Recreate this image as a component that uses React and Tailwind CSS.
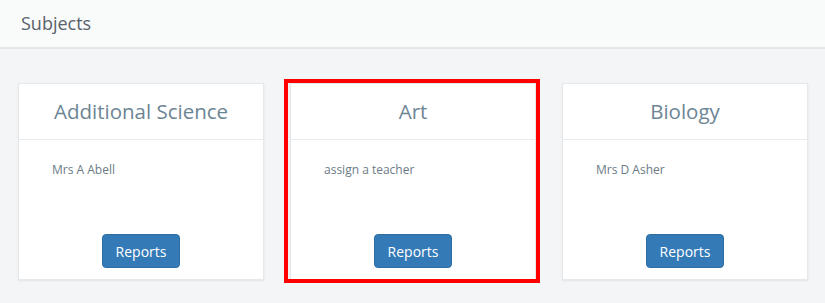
import React from "react";

const subjects = [
  { name: "Additional Science", teacher: "Mrs A Abell" },
  { name: "Art", teacher: "assign a teacher", highlight: true },
  { name: "Biology", teacher: "Mrs D Asher" },
];

function Card({ s }) {
  return (
    <div className="relative w-[246px]">
      {s.highlight && (
        <div className="absolute left-[-6px] top-[-4px] right-[-4px] bottom-[-3px] border-4 border-[#ff0000] pointer-events-none z-10" />
      )}
      <div className="bg-white border border-[#e6e9eb] shadow-[0_1px_2px_rgba(0,0,0,0.08)] h-[197px] flex flex-col">
        <div className="h-[56px] border-b border-[#e8ebed] flex items-center justify-center">
          <span className="text-[20.5px] text-[#6c8594]">{s.name}</span>
        </div>
        <div className="flex-1 flex flex-col px-[33px] pt-[21px] pb-[11px]">
          <div className="text-[12px] text-[#6b7b85]">{s.teacher}</div>
          <div className="flex-1" />
          <div className="flex justify-center">
            <button className="w-[78px] h-[34px] rounded-[4px] bg-[#337ab7] border border-[#2e6da4] text-white text-[14px]">
              Reports
            </button>
          </div>
        </div>
      </div>
    </div>
  );
}

export default function App() {
  return (
    <div
      className="w-[825px] h-[303px] bg-[#f4f5f7] overflow-hidden"
      style={{ fontFamily: '"Open Sans", sans-serif' }}
    >
      <div className="h-[49px] bg-[#f9fafa] border-b-2 border-[#e3e7ea] flex items-center pl-[21px]">
        <span className="text-[18px] text-[#58626b]">Subjects</span>
      </div>
      <div className="flex gap-[26px] pl-[18px] pt-[34px]">
        {subjects.map((s) => (
          <Card key={s.name} s={s} />
        ))}
      </div>
    </div>
  );
}
